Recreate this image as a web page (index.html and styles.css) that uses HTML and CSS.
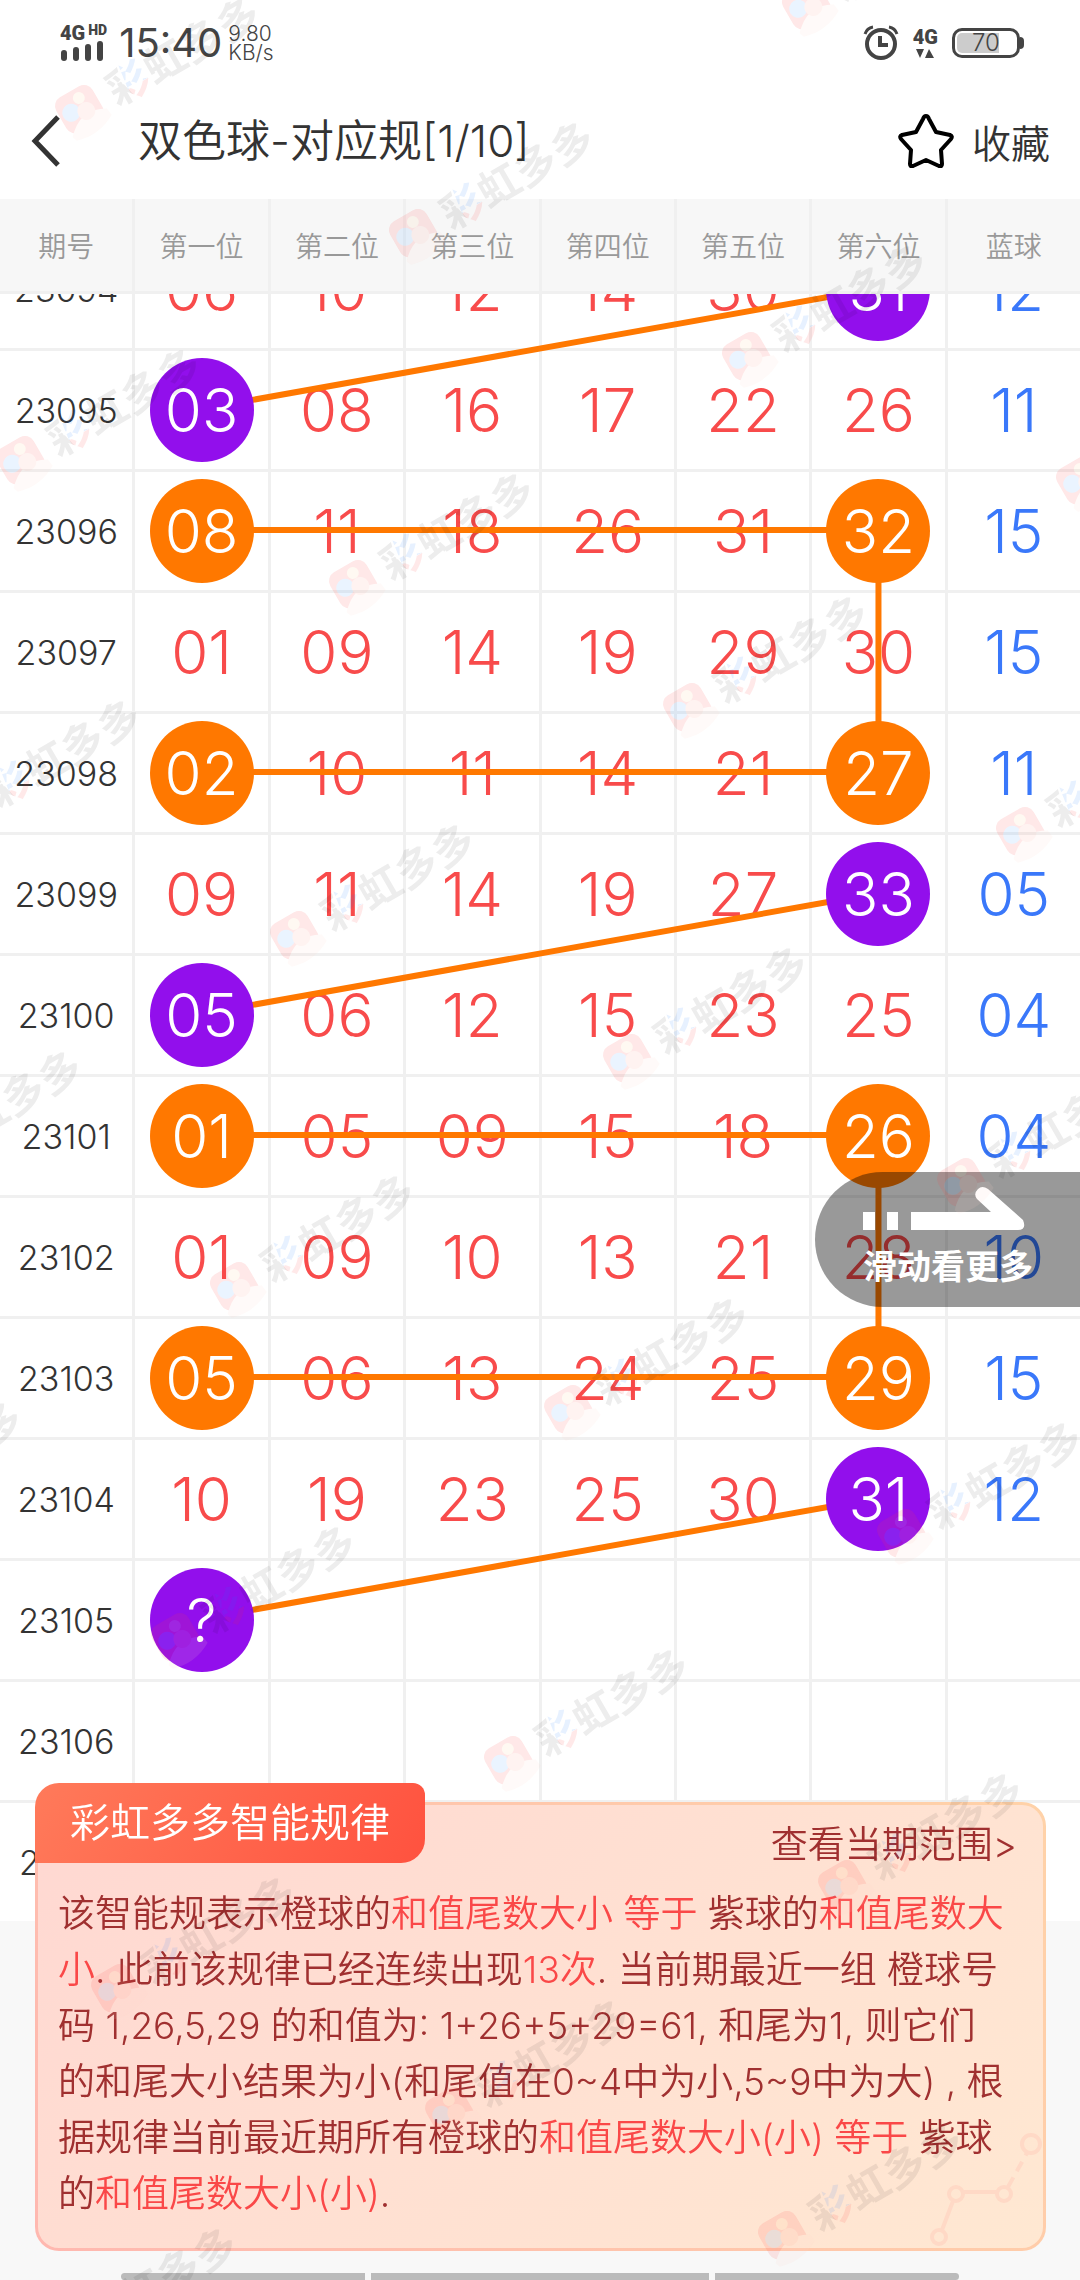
FILE: index.html
```html
<!DOCTYPE html>
<html lang="zh-CN">
	<head>
		<meta charset="UTF-8">
		<meta name="viewport" content="width=device-width, initial-scale=1">
		<title>双色球-对应规</title>
		<link rel="stylesheet" href="styles.css">
	</head>

	<body>
		<div class="page">
			<div class="status">
				<div class="signal">
					<div class="net"><b>4G</b><b class="hd">HD</b></div>
					<svg width="44" height="20" viewBox="0 0 44 20" fill="#444"><rect x="1" y="9" width="6" height="11" rx="3"/><rect x="13" y="6" width="6" height="14" rx="3"/><rect x="25" y="3" width="6" height="17" rx="3"/><rect x="37" y="0" width="6" height="20" rx="3"/></svg>
				</div>
				<span class="time">15:40</span>
				<div class="speed"><span>9.80</span><span>KB/s</span></div>
				<div class="status_right">
					<svg width="36" height="36" viewBox="0 0 36 36" fill="none" stroke="#444"><circle cx="18" cy="19" r="14" stroke-width="4"/><path d="M17 11v9h8" stroke-width="4"/><path d="M2 9Q4 3 10 2M26 2q6 1 8 7" stroke-width="3"/></svg>
					<div class="net_type">
						<b>4G</b>
						<svg width="18" height="9" viewBox="0 0 18 9" fill="#444"><path d="M0 0h8L4 9zM9 9h9L13 0z"/></svg>
					</div>
					<div class="battery">70</div>
				</div>
			</div>

			<div class="nav">
				<button class="back" aria-label="返回">
					<svg width="30" height="52" viewBox="0 0 30 52" fill="none" stroke="#333" stroke-width="5"><path d="M28 2L5 26l23 24"/></svg>
				</button>
				<h1>双色球-对应规[1/10]</h1>
				<button class="fav">
					<svg width="56" height="54" viewBox="0 0 56 54" fill="none" stroke="#000" stroke-width="4" stroke-linejoin="round"><path d="M28 2Q26 2 25 5L18 18 4 21Q1 22 3 25L13 36 12 50Q12 53 15 52L28 46 41 52Q44 53 44 50L43 36 53 25Q55 22 52 21L38 18 31 5Q30 2 28 2z"/></svg>
					<span>收藏</span>
				</button>
			</div>

			<table class="chart">
				<thead>
					<tr><th>期号</th><th>第一位</th><th>第二位</th><th>第三位</th><th>第四位</th><th>第五位</th><th>第六位</th><th>蓝球</th></tr>
				</thead>
				<tbody>
					<tr><th>23094</th><td>06</td><td>10</td><td>12</td><td>14</td><td>30</td><td><i class="p">31</i></td><td>12</td></tr>
					<tr><th>23095</th><td><i class="p">03</i></td><td>08</td><td>16</td><td>17</td><td>22</td><td>26</td><td>11</td></tr>
					<tr><th>23096</th><td><i>08</i></td><td>11</td><td>18</td><td>26</td><td>31</td><td><i>32</i></td><td>15</td></tr>
					<tr><th>23097</th><td>01</td><td>09</td><td>14</td><td>19</td><td>29</td><td>30</td><td>15</td></tr>
					<tr><th>23098</th><td><i>02</i></td><td>10</td><td>11</td><td>14</td><td>21</td><td><i>27</i></td><td>11</td></tr>
					<tr><th>23099</th><td>09</td><td>11</td><td>14</td><td>19</td><td>27</td><td><i class="p">33</i></td><td>05</td></tr>
					<tr><th>23100</th><td><i class="p">05</i></td><td>06</td><td>12</td><td>15</td><td>23</td><td>25</td><td>04</td></tr>
					<tr><th>23101</th><td><i>01</i></td><td>05</td><td>09</td><td>15</td><td>18</td><td><i>26</i></td><td>04</td></tr>
					<tr><th>23102</th><td>01</td><td>09</td><td>10</td><td>13</td><td>21</td><td>28</td><td>10</td></tr>
					<tr><th>23103</th><td><i>05</i></td><td>06</td><td>13</td><td>24</td><td>25</td><td><i>29</i></td><td>15</td></tr>
					<tr><th>23104</th><td>10</td><td>19</td><td>23</td><td>25</td><td>30</td><td><i class="p">31</i></td><td>12</td></tr>
					<tr><th>23105</th><td><i class="p">?</i></td><td></td><td></td><td></td><td></td><td></td><td></td></tr>
					<tr><th>23106</th><td></td><td></td><td></td><td></td><td></td><td></td><td></td></tr>
					<tr><th>23107</th><td></td><td></td><td></td><td></td><td></td><td></td><td></td></tr>
				</tbody>
			</table>
			<!-- 连线, 每行高 121 -->
			<div class="lines">
				<svg width="100%" height="1691" stroke="#ff7800" stroke-width="6">
					<line x1="81.34%" y1="58" x2="18.66%" y2="179"/>
					<line x1="18.66%" y1="300" x2="81.34%" y2="300"/>
					<line x1="81.34%" y1="300" x2="81.34%" y2="542"/>
					<line x1="18.66%" y1="542" x2="81.34%" y2="542"/>
					<line x1="81.34%" y1="663" x2="18.66%" y2="784"/>
					<line x1="18.66%" y1="905" x2="81.34%" y2="905"/>
					<line x1="81.34%" y1="905" x2="81.34%" y2="1147"/>
					<line x1="18.66%" y1="1147" x2="81.34%" y2="1147"/>
					<line x1="81.34%" y1="1268" x2="18.66%" y2="1389"/>
				</svg>
			</div>

			<button class="more">
				<svg width="164" height="46" viewBox="0 0 164 46" fill="#fff"><path d="M0 26h12v18H0zM24 26h11v18H24zM48 26h80L114 13Q110 8 115 3 119-1 125 3L160 34Q164 44 155 44H48z"/></svg>
				<span>滑动看更多</span>
			</button>
		</div>

		<div class="card">
			<h2>彩虹多多智能规律</h2>
			<a class="range" href="#">查看当期范围&gt;</a>
			<p>该智能规表示橙球的<em>和值尾数大小 等于</em> 紫球的<em>和值尾数大小</em>. 此前该规律已经连续出现<em>13次</em>. 当前期最近一组 橙球号码 1,26,5,29 的和值为: 1+26+5+29=61, 和尾为1, 则它们的和尾大小结果为小(和尾值在0~4中为小,5~9中为大) , 根据规律当前最近期所有橙球的<em>和值尾数大小(小) 等于</em> 紫球的<em>和值尾数大小(小)</em>.</p>
			<svg class="trend" width="114" height="118" viewBox="0 0 114 118" fill="none" stroke="#ffd9c6" stroke-width="4"><circle cx="10" cy="107" r="7"/><circle cx="27" cy="64" r="7"/><circle cx="75" cy="64" r="7"/><circle cx="102" cy="14" r="9"/><path d="M13 100l11-29M34 62h34"/><path d="M79 57l19-34" stroke-dasharray="11 7"/></svg>
		</div>

		<div class="home_bar"><span></span><span></span><span></span></div>

		<svg class="watermark" id="watermark" aria-hidden="true">
			<defs>
				<clipPath id="wl"><path d="M33-30H56L50-4 58 30H33z"/></clipPath>
				<clipPath id="wb"><path d="M57-30H80V6H52z"/></clipPath>
				<clipPath id="wr"><path d="M52 6H80V30H55z"/></clipPath>
				<g id="mark" transform="rotate(-30)" font-size="42" font-weight="700">
					<g opacity=".12">
						<rect x="-21" y="-21" width="42" height="40" rx="10" fill="#ff4040"/>
						<path d="M-20 20Q0-2 24 12L25 20Q4 32-18 25z" fill="#ffd5c8"/>
						<circle cx="5" cy="-11" r="6" fill="#ffc890"/>
						<circle cx="-9" cy="-2" r="9" fill="#55a5ff"/>
						<circle cx="5" cy="4" r="9" fill="#ff9c8c"/>
					</g>
					<text x="34" y="16" clip-path="url(#wl)" opacity=".07">彩</text>
					<text x="34" y="16" clip-path="url(#wb)" fill="#1a7bff" opacity=".1">彩</text>
					<text x="34" y="16" clip-path="url(#wr)" fill="#ff2a2a" opacity=".1">彩</text>
					<text x="77" y="16" opacity=".07">虹多多</text>
				</g>
			</defs>
		</svg>
		<script>
			var mark = document.getElementById('watermark');
			var w = window.innerWidth,
				h = window.innerHeight;
			//斜向平铺水印
			for(var j = -2; j < h / 300; j++) {
				for(var i = -8; i < w / 300 + 4; i++) {
					var x = Math.round(80 + i * 333.5 - j * 59.5);
					var y = Math.round(110 + i * 123.5 + j * 351);
					if(x < -250 || x > w + 60 || y < -60 || y > h + 150) {
						continue;
					}
					var use = document.createElementNS('http://www.w3.org/2000/svg', 'use');
					use.setAttribute('href', '#mark');
					use.setAttribute('x', x);
					use.setAttribute('y', y);
					mark.appendChild(use);
				}
			}
		</script>
	</body>
</html>
```
FILE: styles.css
```css
*{
	margin: 0;
	padding: 0;
	box-sizing: border-box;
}

body {
	background-color: #f8f8f8;
	color: #333;
	font-family: Inter, "Noto Sans CJK SC", sans-serif;
	font-weight: 350;
	overflow: hidden;
}

button {
	border: 0;
	background: none;
	font: inherit;
	color: inherit;
	cursor: pointer;
}

svg {
	display: block;
}

.page {
	position: relative;
	height: 100vh;
	overflow: hidden;
}

.status,
.nav,
.chart thead {
	position: relative;
	z-index: 3;
}

.status {
	display: flex;
	align-items: center;
	height: 82px;
	padding: 4px 60px 0;
	background-color: #fff;
	color: #444;
}

.net {
	display: flex;
	gap: 3px;
	height: 16px;
	font-family: Roboto, sans-serif;
	font-size: 20px;
	line-height: 16px;
}

.net b,
.net_type b {
	font-weight: 900;
}

.net .hd {
	font-size: 14px;
	line-height: 10px;
}

.time {
	margin-left: 12px;
	font-size: 40px;
	font-weight: 400;
	line-height: 48px;
}

.speed {
	display: flex;
	flex-direction: column;
	margin-left: 6px;
	font-size: 21px;
	line-height: 19px;
}

.status_right {
	display: flex;
	align-items: center;
	gap: 14px;
	margin-left: auto;
}

.net_type {
	display: flex;
	flex-direction: column;
	align-items: center;
	gap: 4px;
	font-family: Roboto, sans-serif;
	font-size: 20px;
	line-height: 16px;
}

.battery {
	position: relative;
	width: 68px;
	height: 30px;
	border: 3px solid #444;
	border-radius: 10px;
	background: linear-gradient(to right, #ccc 72%, #fff 72%) content-box;
	padding: 2px;
	font-size: 24px;
	line-height: 20px;
	text-align: center;
}

.battery::after {
	content: "";
	position: absolute;
	right: -7px;
	top: 6px;
	width: 4px;
	height: 12px;
	border-radius: 0 4px 4px 0;
	background-color: #444;
}

.nav {
	display: flex;
	align-items: center;
	height: 117px;
	padding: 0 30px;
	background-color: #fff;
}

.nav h1 {
	margin-left: 78px;
	font-size: 44px;
	font-weight: 350;
	line-height: 52px;
}

.fav {
	display: flex;
	align-items: center;
	gap: 18px;
	margin-left: auto;
	font-size: 39px;
}

/* 走势表 */
.chart,
.chart thead,
.chart tbody {
	display: block;
}

.chart tr {
	display: grid;
	grid-template-columns: repeat(8, 1fr);
	gap: 3px;
	border-bottom: 3px solid #f0f0f0;
	background-color: #f0f0f0;
}

.chart th,
.chart td {
	display: flex;
	align-items: center;
	justify-content: center;
	height: 118px;
	background-color: #fff;
	font-weight: 350;
}

.chart thead th {
	height: 92px;
	background-color: #f7f7f7;
	color: #999;
	font-size: 28px;
}

/* 表格已向上滚动半行 */
.chart tbody {
	margin-top: -64px;
}

.chart tbody tr:last-child {
	border-bottom: 0;
}

.chart tbody th {
	font-size: 34px;
}

.chart td {
	color: #f84b4b;
	font-size: 60px;
}

.chart td:last-child {
	color: #3a78fa;
}

.chart i {
	z-index: 2;
	width: 104px;
	height: 104px;
	border-radius: 50%;
	background-color: #ff7800;
	color: #fff;
	font-style: normal;
	line-height: 104px;
	text-align: center;
}

.chart i.p {
	background-color: #920fec;
}

.lines {
	position: absolute;
	top: 230px;
	left: 0;
	right: 0;
	z-index: 1;
}

.more {
	position: absolute;
	top: 1172px;
	right: 0;
	z-index: 3;
	display: flex;
	flex-direction: column;
	align-items: flex-start;
	gap: 12px;
	width: 265px;
	height: 135px;
	padding: 14px 0 0 48px;
	border-radius: 68px 0 0 68px;
	background-color: rgba(0, 0, 0, .4);
	color: #fff;
	font-size: 34px;
	font-weight: 700;
	line-height: 46px;
}

/* 底部规律卡片 */
.card {
	position: fixed;
	left: 35px;
	right: 34px;
	bottom: 29px;
	z-index: 4;
	display: flex;
	flex-direction: column;
	padding: 16px 20px 26px;
	border: 3px solid transparent;
	border-radius: 24px;
	background: linear-gradient(135deg, #ffd8d2, #ffe8d2) padding-box, linear-gradient(60deg, #ffb8b0, #ffd2a8) border-box;
	color: #a03030;
	font-size: 37px;
}

.card h2 {
	position: absolute;
	left: -3px;
	top: -22px;
	padding: 0 35px;
	border-radius: 24px 12px 24px 0;
	background: linear-gradient(120deg, #ff7a5a, #ff523f);
	color: #fff;
	font-size: 40px;
	font-weight: 350;
	line-height: 80px;
}

.range {
	align-self: flex-end;
	margin-right: 6px;
	color: inherit;
	line-height: 48px;
	text-decoration: none;
}

.card p {
	position: relative;
	z-index: 1;
	margin: 17px 12px 0 0;
	line-height: 56px;
}

.card em {
	color: #fa4848;
	font-style: normal;
}

.trend {
	position: absolute;
	right: 0;
	bottom: 0;
}

.home_bar {
	position: fixed;
	left: 0;
	right: 0;
	bottom: 0;
	z-index: 4;
	display: grid;
	grid-template-columns: 244fr 338fr 244fr;
	gap: 6px;
	padding: 0 121px;
}

.home_bar span {
	height: 7px;
	background-color: #bbb;
}

.home_bar span:first-child {
	border-radius: 4px 0 0 4px;
}

.home_bar span:last-child {
	border-radius: 0 4px 4px 0;
}

.watermark {
	position: fixed;
	left: 0;
	top: 0;
	z-index: 5;
	width: 100%;
	height: 100%;
	pointer-events: none;
}
```
